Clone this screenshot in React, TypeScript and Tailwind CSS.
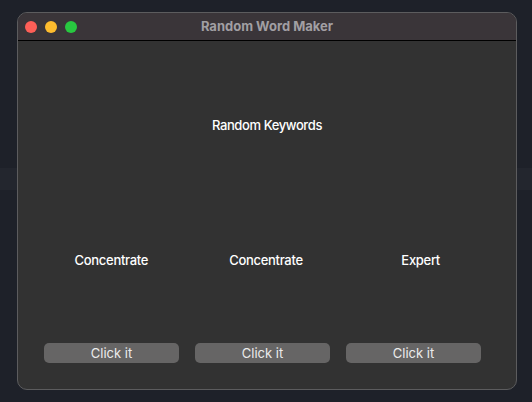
const words = ["Concentrate", "Concentrate", "Expert"];

export default function App() {
  return (
    <div
      className="w-[532px] h-[402px] overflow-hidden bg-[#1e2129] flex flex-col"
      style={{ fontFamily: "Inter, 'Liberation Sans', sans-serif" }}
    >
      <div className="relative w-full h-full">
        {/* background band */}
        <div className="absolute left-0 right-0 top-[168px] h-[22px] bg-[#23262e]" />
        <div className="absolute left-[17px] top-[12px] w-[500px] h-[378px] rounded-[10px] border border-[#5c5c5e] bg-[#323232] overflow-hidden flex flex-col">
          <div className="h-[28px] bg-[#3a3539] border-b border-black flex items-center relative shrink-0">
            <div className="flex items-center gap-[8px] pl-[7px]">
              <span className="w-[12px] h-[12px] rounded-full bg-[#fe5f57]" />
              <span className="w-[12px] h-[12px] rounded-full bg-[#febc2e]" />
              <span className="w-[12px] h-[12px] rounded-full bg-[#28c840]" />
            </div>
            <div className="absolute inset-0 flex items-center justify-center text-[13px] font-bold text-[#a19fa3]">
              Random Word Maker
            </div>
          </div>
          <div className="flex-1 flex flex-col">
            <div className="h-[94px] flex items-end justify-center text-[13px] font-medium tracking-[-0.4px] text-white">
              Random Keywords
            </div>
            <div className="mt-[116px] grid grid-cols-3 pl-[16px] pr-[18px] text-[13px] font-medium tracking-[-0.3px] text-white">
              {words.map((w, i) => (
                <div key={i} className="text-center">{w}</div>
              ))}
            </div>
            <div className="mt-[72px] flex gap-[16px] pl-[26px]">
              {words.map((_, i) => (
                <button
                  key={i}
                  className="w-[135px] h-[20px] rounded-[5px] bg-[#666565] text-[13px] text-[#ececec] leading-[20px]"
                >
                  Click it
                </button>
              ))}
            </div>
          </div>
        </div>
      </div>
    </div>
  );
}
